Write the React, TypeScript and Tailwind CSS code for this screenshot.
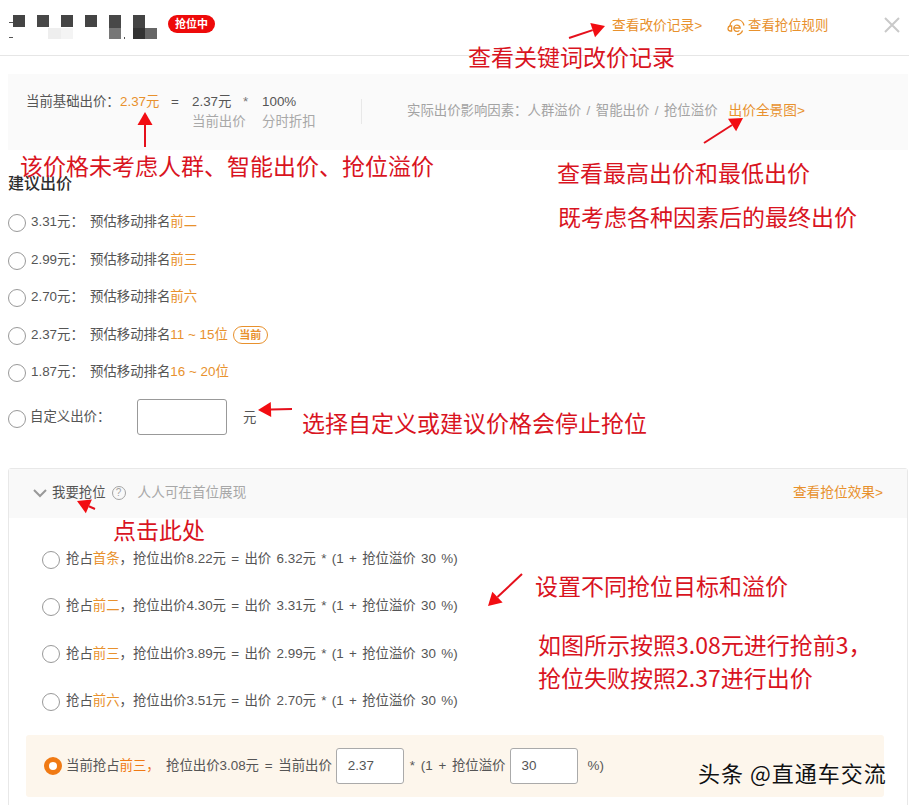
import React from "react";

const Or = ({ children }: { children: React.ReactNode }) => <span className="text-[#e8912d]">{children}</span>;

const Radio = ({ on = false, low = false }: { on?: boolean; low?: boolean }) => {
  if (on) return <span className="w-[18px] h-[18px] shrink-0 rounded-full border-[5px] border-[#f07a14] bg-white" />;
  if (low) return <span className="w-[18px] h-[18px] mt-[4px] shrink-0 rounded-full border border-[#999] bg-white" />;
  return <span className="w-[18px] h-[18px] shrink-0 rounded-full border border-[#999] bg-white" />;
};

const suggestions: [string, React.ReactNode, boolean][] = [
  ["3.31元：", "前二", false],
  ["2.99元：", "前三", false],
  ["2.70元：", "前六", false],
  ["2.37元：", "11 ~ 15位", true],
  ["1.87元：", "16 ~ 20位", false],
];

const grabs: [string, string, string][] = [
  ["首条", "8.22", "6.32"],
  ["前二", "4.30", "3.31"],
  ["前三", "3.89", "2.99"],
  ["前六", "3.51", "2.70"],
];

const notes: [string, number, number][] = [
  ["查看关键词改价记录", 468, 39],
  ["该价格未考虑人群、智能出价、抢位溢价", 20, 148],
  ["查看最高出价和最低出价", 557, 155],
  ["既考虑各种因素后的最终出价", 558, 199],
  ["选择自定义或建议价格会停止抢位", 302, 405],
  ["点击此处", 113, 512],
  ["设置不同抢位目标和溢价", 535, 568],
  ["如图所示按照3.08元进行抢前3，", 538, 627],
  ["抢位失败按照2.37进行出价", 538, 660],
];

const Arrow = ({ x1, y1, x2, y2 }: { x1: number; y1: number; x2: number; y2: number }) => {
  const a = Math.atan2(y2 - y1, x2 - x1);
  const l = 13;
  const w = 7.5;
  const bx = x2 - l * Math.cos(a);
  const by = y2 - l * Math.sin(a);
  const nx = -Math.sin(a) * w;
  const ny = Math.cos(a) * w;
  return (
    <g>
      <line x1={x1} y1={y1} x2={bx} y2={by} stroke="#e5101c" strokeWidth="2" />
      <polygon points={`${x2},${y2} ${bx + nx},${by + ny} ${bx - nx},${by - ny}`} fill="#f20d12" />
    </g>
  );
};

export default function App() {
  return (
    <div className="relative w-[909px] h-[805px] overflow-hidden bg-white text-[13.4px] leading-[20px] text-[#555] font-['Liberation_Sans','Noto_Sans_CJK_SC',sans-serif]">
      {/* header */}
      <div className="h-[56px] border-b border-[#e6e6e6] flex items-center">
        <svg width="157" height="34" viewBox="0 0 157 34" className="shrink-0 mb-[8px]">
          <rect x="9" y="15" width="5" height="1" fill="#555" />
          <rect x="9" y="30" width="4" height="1" fill="#555" />
          <rect x="13" y="8" width="12" height="12" fill="#444" />
          <rect x="37" y="8" width="12" height="12" fill="#484848" />
          <rect x="61" y="8" width="12" height="12" fill="#444" />
          <rect x="85" y="8" width="12" height="12" fill="#444" />
          <rect x="109" y="8" width="12" height="13" fill="#484848" />
          <rect x="133" y="8" width="12" height="13" fill="#444" />
          <rect x="48" y="21" width="13" height="11" fill="#eeeeee" />
          <rect x="61" y="21" width="12" height="11" fill="#f4f4f4" />
          <rect x="109" y="21" width="12" height="11" fill="#777" />
          <rect x="133" y="21" width="12" height="11" fill="#333" />
          <rect x="145" y="21" width="12" height="11" fill="#666" />
          <rect x="124" y="30" width="1" height="2" fill="#555" />
        </svg>
        <span className="ml-[11px] mb-[8px] w-[47px] h-[18px] rounded-full bg-[#ee0a0a] text-white text-[11px] font-bold leading-[18px] text-center">抢位中</span>
        <span className="ml-[397px] w-[90px] mb-[3px] whitespace-nowrap text-[13.7px] text-[#e8912d]">查看改价记录&gt;</span>
        <svg width="20" height="20" viewBox="0 0 20 20" fill="none" stroke="#e8912d" strokeWidth="1.3" className="ml-[25px] mb-[1px] shrink-0">
          <path d="M2.8 9 A7.2 7.2 0 0 1 17 8.5" />
          <path d="M4.6 9 H3 Q1 9.5 1 11.5 Q1 13.8 3 14 H4.6 Z" />
          <path d="M7 11 H13.2 A3.2 3.2 0 1 0 12.4 13.4" />
          <path d="M15.6 13.5 Q14 17.5 10 17.6" />
        </svg>
        <span className="ml-[1px] mb-[3px] whitespace-nowrap text-[#e8912d]">查看抢位规则</span>
        <svg width="16" height="16" viewBox="0 0 16 16" stroke="#c9c9c9" strokeWidth="2" className="ml-[56px] mb-[6px] shrink-0">
          <path d="M1 1 L15 15 M15 1 L1 15" />
        </svg>
      </div>

      {/* base bid panel */}
      <div className="mt-[18px] ml-[8px] mr-px h-[76px] bg-[#fafafa] flex items-center pl-[18px]">
        <div className="flex w-[335px] shrink-0 whitespace-nowrap">
          <span className="w-[94px]">当前基础出价：</span>
          <span className="w-[51px]"><Or>2.37元</Or></span>
          <span className="w-[21px]">=</span>
          <div className="flex flex-col w-[51px]">
            <span>2.37元</span>
            <span className="text-[#a8a8a8]">当前出价</span>
          </div>
          <span className="w-[19px] text-[#777]">*</span>
          <div className="flex flex-col">
            <span>100%</span>
            <span className="text-[#a8a8a8]">分时折扣</span>
          </div>
        </div>
        <div className="w-px h-[25px] bg-[#e8e8e8] mt-[-2px]" />
        <span className="ml-[45px] mb-[2px] whitespace-nowrap text-[#a3a3a3] [word-spacing:1.75px]">实际出价影响因素：人群溢价 / 智能出价 / 抢位溢价</span>
        <span className="ml-[11px] mb-[2px] whitespace-nowrap text-[13.7px] text-[#e8912d]">出价全景图&gt;</span>
      </div>

      {/* suggestions */}
      <div className="ml-[8px] mt-[24px] h-[20px] text-[16px] font-medium leading-[20px] text-[#2e2e2e]">建议出价</div>
      <div className="ml-[8px] mt-[10.25px] flex flex-col">
        {suggestions.map(([price, rank, cur]) => (
          <div key={price} className="h-[37.5px] flex items-center">
            <Radio />
            <span className="ml-[5px] w-[59px] mb-[2px]">{price}</span>
            <span className="mb-[2px]">预估移动排名</span>
            <span className="mb-[2px]"><Or>{rank}</Or></span>
            {cur && (
              <span className="ml-[5px] mb-[2px] w-[35px] h-[18px] rounded-full border border-[#e8912d] text-[#e8912d] text-[11px] font-bold leading-[16px] text-center">当前</span>
            )}
          </div>
        ))}
      </div>
      <div className="ml-[8px] mt-[7.25px] h-[36px] flex items-center">
        <Radio low />
        <span className="ml-[4px] w-[107px]">自定义出价：</span>
        <span className="w-[90px] h-[36px] rounded-[3px] border border-[#999] bg-white" />
        <span className="ml-[16px] mt-[2px]">元</span>
      </div>

      {/* grab section */}
      <div className="mt-[33px] ml-[8px] mr-px h-[340px] rounded-t-[3px] border border-[#e8e8e8]">
        <div className="h-[49px] bg-[#f9f9f9] flex items-center pl-[24px] pr-[24px]">
          <svg width="14" height="9" viewBox="0 0 14 9" fill="none" stroke="#999" strokeWidth="2" className="shrink-0">
            <path d="M1 1 L7 7 L13 1" />
          </svg>
          <span className="ml-[5px] mb-[2px]">我要抢位</span>
          <span className="ml-[6px] mb-[2px] w-[14px] h-[14px] rounded-full border border-[#a3a3a3] text-[#a3a3a3] text-[10px] leading-[12px] text-center">?</span>
          <span className="ml-[12px] mb-[2px] text-[13.6px] text-[#a8a8a8]">人人可在首位展现</span>
          <span className="ml-auto mb-[2px] text-[13.7px] text-[#e8912d]">查看抢位效果&gt;</span>
        </div>
        <div className="pt-[18px] pl-[33px] flex flex-col">
          {grabs.map(([pos, total, base]) => (
            <div key={pos} className="h-[47.33px] flex items-center">
              <Radio />
              <span className="ml-[6px] mb-px whitespace-nowrap [word-spacing:1.6px]">
                抢占<Or>{pos}</Or>，抢位出价{total}元 = 出价 {base}元 * (1 + 抢位溢价 30 %)
              </span>
            </div>
          ))}
        </div>
        <div className="mt-[10px] ml-[17px] w-[858px] h-[62px] rounded-[3px] bg-[#fdf6ec] flex items-center pl-[18px] whitespace-nowrap [word-spacing:2px]">
          <Radio on />
          <span className="ml-[4px] w-[100px] mb-px">当前抢占<span className="text-[#f07a14]">前三，</span></span>
          <span className="mb-px">抢位出价3.08元 = 当前出价</span>
          <span className="ml-[4px] w-[68px] h-[36px] rounded-[3px] border border-[#aaa] bg-white pl-[11px] leading-[34px]">2.37</span>
          <span className="ml-[6px] mb-px">* (1 + 抢位溢价</span>
          <span className="ml-[4px] w-[68px] h-[36px] rounded-[3px] border border-[#aaa] bg-white pl-[11px] leading-[34px]">30</span>
          <span className="ml-[10px] mb-px">%)</span>
        </div>
      </div>

      {/* annotation layer */}
      {notes.map(([text, x, y]) => (
        <span
          key={text}
          className="absolute whitespace-nowrap text-[23px] leading-[34px] text-[#d9141f] font-['Noto_Sans_CJK_SC',sans-serif]"
          style={{ left: x, top: y }}
        >
          {text}
        </span>
      ))}
      <svg width="909" height="805" viewBox="0 0 909 805" className="absolute left-0 top-0 pointer-events-none">
        <Arrow x1={569} y1={38} x2={605} y2={26} />
        <Arrow x1={145} y1={147} x2={145} y2={112} />
        <Arrow x1={704} y1={143} x2={743} y2={118} />
        <Arrow x1={292} y1={409} x2={258} y2={410} />
        <Arrow x1={95} y1={509} x2={77} y2={501} />
        <Arrow x1={522} y1={574} x2={488} y2={606} />
      </svg>
      <span className="absolute left-[698px] top-[757px] whitespace-nowrap text-[22px] tracking-[1px] leading-[30px] text-[#111] [text-shadow:0_0_2px_#fff] font-['Noto_Sans_CJK_SC',sans-serif]">头条 @直通车交流</span>
    </div>
  );
}
